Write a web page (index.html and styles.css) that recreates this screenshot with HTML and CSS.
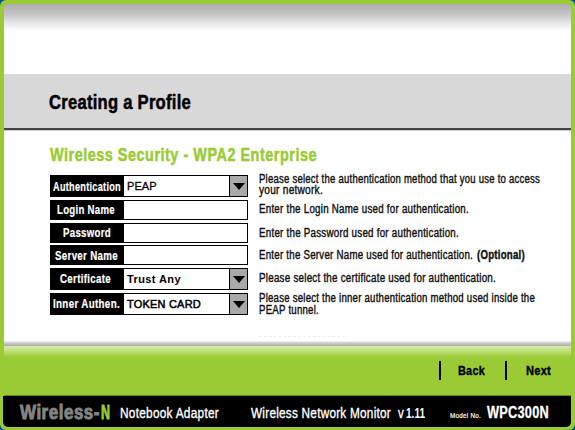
FILE: index.html
```html
<!DOCTYPE html>
<html lang="en">
<head>
<meta charset="utf-8">
<title>Creating a Profile</title>
<link rel="stylesheet" href="styles.css">
</head>
<body>
<div class="window">
  <header class="top"></header>
  <div class="banner">
    <svg class="title" width="160" height="28"><text x="0" y="20" textLength="142" lengthAdjust="spacingAndGlyphs">Creating a Profile</text></svg>
  </div>
  <main class="content">
    <svg class="heading" width="290" height="24"><text x="0" y="16.500" textLength="267" lengthAdjust="spacingAndGlyphs">Wireless Security - WPA2 Enterprise</text></svg>
    <form class="form">
      <div class="row tall">
        <div class="field">
          <svg class="label" width="74" height="20"><text x="2" y="14.500" textLength="68" lengthAdjust="spacingAndGlyphs">Authentication</text></svg>
          <span class="value peap">PEAP</span>
          <span class="arrow"><svg width="12" height="7"><path d="M0 0H12L6 7Z"/></svg></span>
        </div>
        <svg class="desc" width="300" height="22"><text x="0" y="8" textLength="281" lengthAdjust="spacingAndGlyphs">Please select the authentication method that you use to access</text><text x="0" y="19" textLength="64" lengthAdjust="spacingAndGlyphs">your network.</text></svg>
      </div>
      <div class="row login">
        <div class="field">
          <svg class="label" width="74" height="18"><text x="6" y="13" textLength="58" lengthAdjust="spacingAndGlyphs">Login Name</text></svg>
          <span class="value"></span>
        </div>
        <svg class="desc" width="300" height="20"><text x="0" y="13" textLength="210" lengthAdjust="spacingAndGlyphs">Enter the Login Name used for authentication.</text></svg>
      </div>
      <div class="row password">
        <div class="field">
          <svg class="label" width="74" height="18"><text x="12" y="13" textLength="48" lengthAdjust="spacingAndGlyphs">Password</text></svg>
          <span class="value"></span>
        </div>
        <svg class="desc" width="300" height="20"><text x="0" y="13.500" textLength="200" lengthAdjust="spacingAndGlyphs">Enter the Password used for authentication.</text></svg>
      </div>
      <div class="row server">
        <div class="field">
          <svg class="label" width="74" height="18"><text x="4" y="13.500" textLength="63" lengthAdjust="spacingAndGlyphs">Server Name</text></svg>
          <span class="value"></span>
        </div>
        <svg class="desc" width="300" height="20"><text x="0" y="14" textLength="214" lengthAdjust="spacingAndGlyphs">Enter the Server Name used for authentication.</text><text class="optional" x="218" y="14" textLength="48" lengthAdjust="spacingAndGlyphs">(Optional)</text></svg>
      </div>
      <div class="row tall certificate">
        <div class="field">
          <svg class="label" width="74" height="20"><text x="9" y="14" textLength="51" lengthAdjust="spacingAndGlyphs">Certificate</text></svg>
          <span class="value">Trust Any</span>
          <span class="arrow"><svg width="12" height="7"><path d="M0 0H12L6 7Z"/></svg></span>
        </div>
        <svg class="desc" width="300" height="22"><text x="0" y="14" textLength="237" lengthAdjust="spacingAndGlyphs">Please select the certificate used for authentication.</text></svg>
      </div>
      <div class="row tall inner">
        <div class="field">
          <svg class="label" width="74" height="20"><text x="2" y="14" textLength="67" lengthAdjust="spacingAndGlyphs">Inner Authen.</text></svg>
          <span class="value token">TOKEN CARD</span>
          <span class="arrow"><svg width="12" height="7"><path d="M0 0H12L6 7Z"/></svg></span>
        </div>
        <svg class="desc" width="300" height="24"><text x="0" y="9" textLength="276" lengthAdjust="spacingAndGlyphs">Please select the inner authentication method used inside the</text><text x="0" y="20.500" textLength="60" lengthAdjust="spacingAndGlyphs">PEAP tunnel.</text></svg>
      </div>
    </form>
    <div class="residue"></div>
  </main>
  <div class="shade"></div>
  <nav class="actions">
    <span class="action"><svg width="40" height="18"><text x="0" y="13.500" textLength="27" lengthAdjust="spacingAndGlyphs">Back</text></svg></span>
    <span class="action next"><svg width="30" height="18"><text x="0" y="13.500" textLength="25" lengthAdjust="spacingAndGlyphs">Next</text></svg></span>
  </nav>
  <footer class="footer">
    <svg class="product" width="568" height="30">
      <text class="brand" x="17" y="23" textLength="80" lengthAdjust="spacingAndGlyphs">Wireless-</text>
      <text class="brand n" x="98" y="23" textLength="9" lengthAdjust="spacingAndGlyphs">N</text>
      <text class="name" x="117" y="21.500" textLength="99" lengthAdjust="spacingAndGlyphs">Notebook Adapter</text>
      <text class="name" x="248" y="21.500" textLength="140" lengthAdjust="spacingAndGlyphs">Wireless Network Monitor</text>
      <text class="name" x="395" y="21.500" textLength="6" lengthAdjust="spacingAndGlyphs">v</text>
      <text class="version" x="403" y="21.500" textLength="19" lengthAdjust="spacingAndGlyphs">1.11</text>
      <text class="small" x="447" y="22" textLength="31" lengthAdjust="spacingAndGlyphs">Model No.</text>
      <text class="model" x="484" y="22" textLength="62" lengthAdjust="spacingAndGlyphs">WPC300N</text>
    </svg>
  </footer>
</div>
</body>
</html>
```
FILE: styles.css
```css
* { box-sizing: border-box; }
body { margin: 0; background: #00509c; }
svg { display: block; flex: none; overflow: visible; }
text { font-family: "Liberation Sans Narrow", "Liberation Sans", sans-serif; letter-spacing: .3px; }

.window {
  width: 575px;
  height: 430px;
  padding: 4px 4px 3px;
  overflow: hidden;
  background: #9acb34;
  border-radius: 6px;
}
.top {
  height: 70px;
  border-radius: 4px 4px 0 0;
  background: linear-gradient(#acacac 0, #c4c4c4 10px, #e6e6e6 19px, #fff 27px);
}
.banner {
  height: 56px;
  padding: 15px 0 0 45px;
  background: #d8d8d8;
  border-bottom: 2px solid #444;
}
.title text { font-size: 19.500px; font-weight: bold; stroke: #000; stroke-width: .5px; letter-spacing: .3px; }

.content {
  height: 211px;
  padding: 13px 0 0 46px;
  background: #fff;
  border-top: 1px solid #ccc;
}
.heading text { font-size: 17.500px; font-weight: bold; fill: #9acb34; stroke: #9acb34; stroke-width: .5px; letter-spacing: .6px; }
.form { margin: 7px 0 0; display: grid; grid-template-rows: 25px 22.500px 22.500px 23px 25px 22px; }
.row { display: flex; gap: 11px; height: 20px; }
.tall { height: 22px; }
.field { display: flex; width: 198px; border: 1px solid #000; background: #fff; }
.label { width: 73px; height: 100%; background: #000; }
.label text { font-size: 12.500px; font-weight: bold; fill: #fff; stroke: #fff; stroke-width: .2px; letter-spacing: .4px; }
.value { flex: 1; padding: 4px 0 0 3px; font: bold 11px/13px "Liberation Sans", sans-serif; letter-spacing: .4px; white-space: nowrap; }
.peap { font-weight: normal; letter-spacing: .1px; -webkit-text-stroke: .3px #000; }
.token { font-weight: normal; letter-spacing: .2px; -webkit-text-stroke: .5px #000; }
.arrow { display: flex; align-items: center; justify-content: center; width: 18px; background: #a9a9a9; border-left: 1px solid #000; }
.desc text { font-size: 12px; fill: #111; stroke: #111; stroke-width: .4px; letter-spacing: .3px; }
.desc .optional { font-weight: bold; }
.residue { width: 86px; margin: 21px 0 0 209px; border-top: 1px dashed #eee; }

.shade { height: 5px; background: linear-gradient(#f4f4f4, #ccc 40%, #aaa); }
.actions {
  height: 50px;
  padding: 15px 0 0 435px;
  display: flex;
  border-bottom: 1px solid #638720;
  background: linear-gradient(#d9eba9, #bfdf7c 5px, #9acb34 11px);
}
.action { display: flex; width: 66px; height: 19px; padding-left: 17px; border-left: 2px solid #000; }
.next { padding-left: 19px; }
.action text { font-size: 13px; font-weight: bold; stroke: #000; stroke-width: .4px; }

.footer { height: 31px; margin-left: -1px; background: #000; border-radius: 0 0 5px 5px; }
.product .brand { font-size: 19.500px; font-weight: bold; fill: #858585; stroke: #858585; stroke-width: .9px; letter-spacing: .6px; }
.product .n { fill: #9acb34; stroke: #9acb34; letter-spacing: 0; }
.name { font-size: 14px; fill: #fff; stroke: #fff; stroke-width: .35px; }
.version { font-size: 15px; font-weight: bold; fill: #fff; letter-spacing: 0; }
.small { font-size: 7.500px; fill: #fff; stroke: #fff; stroke-width: .2px; }
.model { font-size: 16px; font-weight: bold; fill: #fff; stroke: #fff; stroke-width: .3px; }
```
